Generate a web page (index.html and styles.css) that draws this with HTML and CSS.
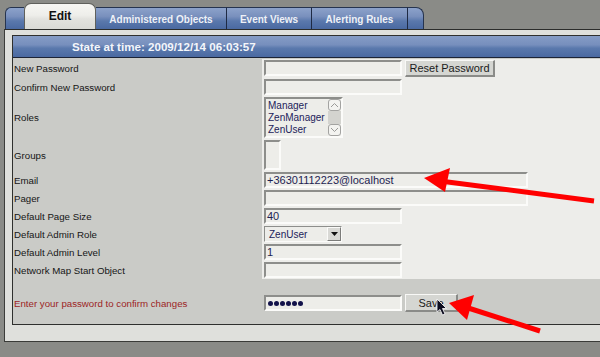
FILE: index.html
```html
<!DOCTYPE html>
<html>
<head>
<meta charset="utf-8">
<link rel="stylesheet" href="styles.css">
</head>
<body>
<div class="page">
  <div class="tabs">
    <div class="tab cap-left"></div>
    <div class="tab active">Edit</div>
    <div class="tab t-admin">Administered Objects</div>
    <div class="tab t-event">Event Views</div>
    <div class="tab t-alert">Alerting Rules</div>
    <div class="tab cap-right"></div>
  </div>
  <div class="panel">
    <div class="box">
      <div class="box-head">State at time: 2009/12/14 06:03:57</div>
      <div class="form">
        <div class="label">New Password</div>
        <div class="value"><div class="field w-short"></div><div class="btn btn-reset">Reset Password</div></div>

        <div class="label">Confirm New Password</div>
        <div class="value"><div class="field w-short"></div></div>

        <div class="label">Roles</div>
        <div class="value">
          <div class="listbox">
            <div class="items"><div>Manager</div><div>ZenManager</div><div>ZenUser</div></div>
            <div class="sbar">
              <div class="sbtn"><svg width="9" height="6" viewBox="0 0 9 6"><path d="M1 5 L4.5 1.5 L8 5" fill="none" stroke="#9a9a98" stroke-width="1"/></svg></div>
              <div class="strack"></div>
              <div class="sbtn"><svg width="9" height="6" viewBox="0 0 9 6"><path d="M1 1 L4.5 4.5 L8 1" fill="none" stroke="#9a9a98" stroke-width="1"/></svg></div>
            </div>
          </div>
        </div>

        <div class="label">Groups</div>
        <div class="value"><div class="groups"></div></div>

        <div class="label">Email</div>
        <div class="value"><div class="field w-long">+36301112223@localhost</div></div>

        <div class="label">Pager</div>
        <div class="value"><div class="field w-long"></div></div>

        <div class="label">Default Page Size</div>
        <div class="value"><div class="field w-short">40</div></div>

        <div class="label">Default Admin Role</div>
        <div class="value">
          <div class="select"><span class="sel-text">ZenUser</span><span class="sel-btn"><svg width="7" height="4" viewBox="0 0 7 4"><path d="M0 0 H7 L3.5 4 Z" fill="#111"/></svg></span></div>
        </div>

        <div class="label">Default Admin Level</div>
        <div class="value"><div class="field w-short">1</div></div>

        <div class="label">Network Map Start Object</div>
        <div class="value"><div class="field w-short"></div></div>
      </div>
      <div class="confirm">
        <div class="label red">Enter your password to confirm changes</div>
        <div class="value plain">
          <div class="field w-short pw"><i></i><i></i><i></i><i></i><i></i><i></i></div>
          <div class="btn btn-save">Save</div>
        </div>
      </div>
    </div>
  </div>
  <svg class="overlay" width="600" height="357" viewBox="0 0 600 357">
    <line x1="594" y1="201" x2="440" y2="181" stroke="#ff0000" stroke-width="5"/>
    <polygon points="424,178 450,168 445,192" fill="#ff0000"/>
    <line x1="540" y1="331" x2="462" y2="306" stroke="#ff0000" stroke-width="5"/>
    <polygon points="449,303 474,295 467,320" fill="#ff0000"/>
    <path d="M437 299 L437 312 L440 309.5 L442.5 315 L445 314 L442.5 308.5 L446.5 308.5 Z" fill="#0c0c1e" stroke="#ffffff" stroke-width="0.8"/>
  </svg>
</div>
</body>
</html>
```
FILE: styles.css
```css
html, body {
  margin: 0;
  padding: 0;
}
body {
  background: #8a8b87;
  font-family: "Liberation Sans", Arial, sans-serif;
  overflow: hidden;
  width: 600px;
  height: 357px;
}
.page {
  position: relative;
  width: 600px;
  height: 357px;
  overflow: hidden;
}
.tabs {
  height: 29px;
  display: flex;
  align-items: flex-end;
  padding-left: 5px;
}
.tab {
  box-sizing: border-box;
  height: 22px;
  border-top: 1px solid #26344f;
  border-right: 1px solid #1e2a44;
  background: linear-gradient(to bottom, #8ca2ca 0%, #7990bd 40%, #5a78ac 62%, #4a69a1 100%);
  color: #eef1f7;
  font-weight: bold;
  font-size: 10px;
  display: flex;
  align-items: center;
  justify-content: center;
  padding-top: 1px;
}
.cap-left {
  width: 19px;
  border-top-left-radius: 6px;
  border-left: 1px solid #26344f;
  border-right: none;
}
.active {
  width: 72px;
  height: 26px;
  border: 1px solid #5f605c;
  border-bottom: none;
  border-radius: 7px 7px 0 0;
  background: linear-gradient(to bottom, #f6f6f3 0%, #eeeeea 45%, #e2e2de 60%, #dadad6 100%);
  color: #111;
  font-size: 12px;
  padding-top: 0;
  padding-bottom: 1px;
}
.t-admin { width: 131px; }
.t-event { width: 85px; }
.t-alert { width: 96px; }
.cap-right {
  width: 16px;
  border-top-right-radius: 8px;
  border-right: 1px solid #26344f;
}
.panel {
  margin-left: 4px;
  margin-right: -30px;
  border-top: 1px solid #2c2d2b;
  border-left: 1px solid #3c3d3a;
  border-bottom: 1px solid #3a3b38;
  background: #dfe0dc;
  padding: 5px 0 16px 7px;
}
.box {
  border: 1px solid #2f302e;
  border-right: none;
  background: #cacbc7;
}
.box-head {
  height: 21px;
  border-bottom: 1px solid #1c2436;
  background: linear-gradient(to bottom, #859cc6 0%, #778fbd 42%, #5a79ad 58%, #4a69a1 100%);
  color: #f4f6fa;
  font-weight: bold;
  font-size: 11.6px;
  display: flex;
  align-items: center;
  padding-left: 59px;
}
.form {
  display: grid;
  grid-template-columns: 249px 1fr;
  padding-top: 1px;
}
.label {
  background: #cacbc7;
  color: #151515;
  font-size: 9.7px;
  display: flex;
  align-items: center;
  padding-left: 1px;
}
.value {
  background: #ededea;
  padding: 1px 2px;
  display: flex;
  align-items: flex-start;
  gap: 3px;
}
.field {
  box-sizing: border-box;
  height: 16px;
  background: #edede9;
  border-top: 2px solid #8d8e8b;
  border-left: 2px solid #8d8e8b;
  border-bottom: 2px solid #fbfbf9;
  border-right: 2px solid #fbfbf9;
  color: #1e1e52;
  font-size: 11px;
  line-height: 12px;
  padding-left: 1px;
  white-space: nowrap;
}
.w-short { width: 138px; }
.w-long { width: 264px; }
.btn {
  box-sizing: border-box;
  height: 17px;
  background: #d5d6d2;
  border-top: 1px solid #f8f8f6;
  border-left: 1px solid #f8f8f6;
  border-bottom: 2px solid #8a8b88;
  border-right: 2px solid #8a8b88;
  color: #1b1b1b;
  font-size: 11px;
  display: flex;
  align-items: center;
  justify-content: center;
}
.btn-reset { width: 90px; }
.btn-save { width: 53px; height: 18px; }
.listbox {
  box-sizing: border-box;
  width: 79px;
  height: 41px;
  background: #edede9;
  border-top: 2px solid #8d8e8b;
  border-left: 2px solid #8d8e8b;
  border-bottom: 2px solid #fbfbf9;
  border-right: 2px solid #fbfbf9;
  display: flex;
  justify-content: space-between;
}
.items {
  color: #22225a;
  font-size: 10px;
  line-height: 12px;
  padding: 1px 0 0 2px;
}
.sbar {
  width: 13px;
  display: flex;
  flex-direction: column;
}
.sbtn {
  box-sizing: border-box;
  height: 12px;
  border: 1px solid #a3a3a1;
  border-radius: 3px;
  background: #f3f3f0;
  display: flex;
  align-items: center;
  justify-content: center;
}
.strack {
  flex: 1;
  background: #d3d3cf;
}
.groups {
  box-sizing: border-box;
  width: 17px;
  height: 30px;
  background: #edede9;
  border-top: 2px solid #8d8e8b;
  border-left: 2px solid #8d8e8b;
  border-bottom: 2px solid #fbfbf9;
  border-right: 2px solid #fbfbf9;
}
.select {
  box-sizing: border-box;
  width: 78px;
  height: 16px;
  background: #edede9;
  border-top: 1px solid #8d8e8b;
  border-left: 1px solid #8d8e8b;
  border-bottom: 1px solid #fbfbf9;
  border-right: 1px solid #fbfbf9;
  display: flex;
  align-items: center;
  justify-content: space-between;
}
.sel-text {
  color: #22225a;
  font-size: 10px;
  padding-left: 4px;
}
.sel-btn {
  box-sizing: border-box;
  width: 14px;
  height: 14px;
  background: #d9d9d5;
  border-top: 1px solid #fbfbf9;
  border-left: 1px solid #fbfbf9;
  border-bottom: 1px solid #7c7c7a;
  border-right: 1px solid #7c7c7a;
  display: flex;
  align-items: center;
  justify-content: center;
}
.confirm {
  display: grid;
  grid-template-columns: 249px 1fr;
  padding: 15px 0 12px;
  background: #cacbc7;
}
.value.plain {
  background: transparent;
  padding: 0 2px;
  align-items: center;
}
.red {
  color: #9c1f1f;
}
.pw {
  display: flex;
  align-items: center;
  gap: 1px;
  padding-left: 2px;
}
.pw i {
  width: 5px;
  height: 5px;
  border-radius: 50%;
  background: #12124a;
}
.overlay {
  position: absolute;
  left: 0;
  top: 0;
  pointer-events: none;
}
```
